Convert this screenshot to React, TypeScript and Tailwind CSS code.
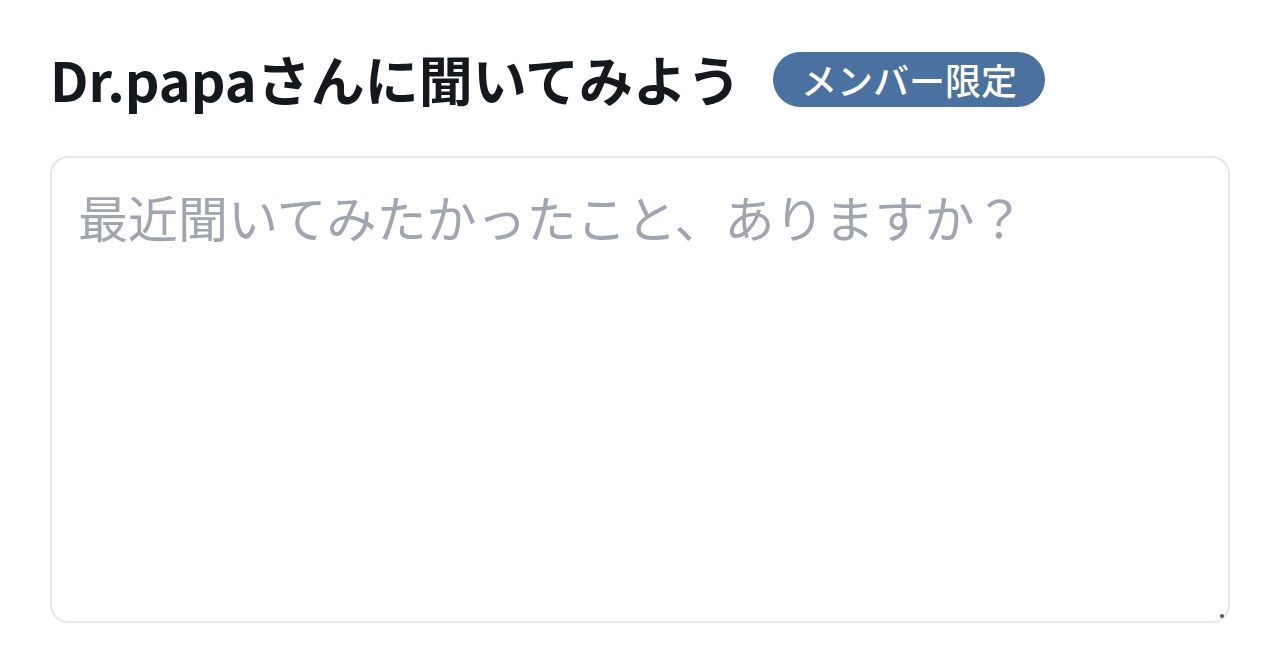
export default function App() {
  return (
    <div
      className="min-h-screen w-full bg-white px-[50px] pt-[44px]"
      style={{ fontFamily: '"Noto Sans CJK JP", "Noto Sans", sans-serif' }}
    >
      <div className="flex items-center gap-[32px]">
        <h1 className="text-[54px] font-bold leading-[70px] text-[#15181d]">
          Dr.papaさんに聞いてみよう
        </h1>
        <span className="inline-flex h-[55px] items-center rounded-full bg-[#4a71a0] px-[28px] text-[36px] font-medium leading-none text-white">
          メンバー限定
        </span>
      </div>

      <div className="relative mt-[42px] w-[1180px]">
        <textarea
          className="block h-[467px] w-full resize-none rounded-[18px] border-2 border-[#e6e7e9] bg-white px-[26px] py-[21px] text-[50px] leading-[1.5] text-[#15181d] outline-none placeholder:text-[#a0a5b0]"
          placeholder="最近聞いてみたかったこと、ありますか？"
        />
        <span className="absolute bottom-[5px] right-[6px] h-[4px] w-[4px] rounded-full bg-[#555]" />
      </div>
    </div>
  );
}
